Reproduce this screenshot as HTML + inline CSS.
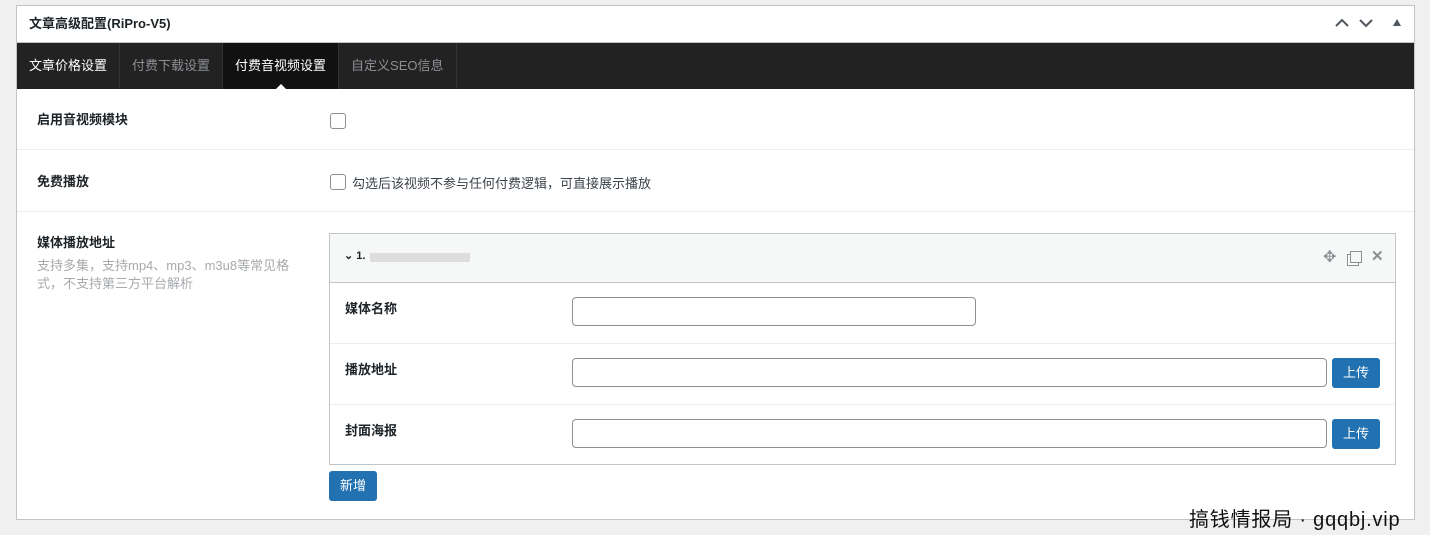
<!DOCTYPE html><html><head><meta charset="utf-8"><style>
body{margin:0;background:#f0f0f1;width:1430px;height:535px;overflow:hidden;font-family:"Liberation Sans","Noto Sans CJK SC",sans-serif;font-size:13px;color:#1d2327;position:relative}
.box{position:absolute;left:16px;top:5px;width:1399px;height:515px;background:#fff;border:1px solid #c3c4c7;box-sizing:border-box}
.hd{height:37px;border-bottom:1px solid #c3c4c7;box-sizing:border-box;font-weight:bold;font-size:13px;line-height:36px;padding-left:12px;position:relative}
.tabs{height:46px;background:#222;display:flex}
.tab{padding:0 12px;line-height:46px;color:#8c8f94;border-right:1px solid #333;font-size:13px;position:relative}
.tab.w{color:#fff}.tab.a{background:#111;color:#fff}
.tab.a:after{content:"";position:absolute;left:50%;bottom:0;margin-left:-5px;border:5px solid transparent;border-bottom-color:#fff;border-top:0}
.row{position:absolute;left:0;right:0;border-bottom:1px solid #eee}
.lb{position:absolute;left:20px;font-weight:bold}
.cb{position:absolute;width:14px;height:14px;border:1px solid #8c8f94;border-radius:3px;background:#fff}
.inp{position:absolute;height:29px;border:1px solid #8c8f94;border-radius:4px;box-sizing:border-box;background:#fff}
.btn{position:absolute;background:#2271b1;color:#fff;border-radius:3px;font-size:13px;text-align:center;line-height:30px;height:30px}
</style></head><body>
<div class="box">
<div class="hd">文章高级配置(RiPro-V5)
<svg style="position:absolute;left:1318px;top:12px" width="14" height="10"><path d="M1 8L7 2L13 8" stroke="#50575e" stroke-width="2" fill="none"/></svg>
<svg style="position:absolute;left:1342px;top:12px" width="14" height="10"><path d="M1 2L7 8L13 2" stroke="#50575e" stroke-width="2" fill="none"/></svg>
<svg style="position:absolute;left:1376px;top:13px" width="8" height="7"><path d="M0 7L4 0L8 7Z" fill="#50575e"/></svg>
</div>
<div class="tabs"><div class="tab w">文章价格设置</div><div class="tab">付费下载设置</div><div class="tab a">付费音视频设置</div><div class="tab">自定义SEO信息</div></div>
<div class="row" style="top:83px;height:60px"><div class="lb" style="top:20px">启用音视频模块</div><div class="cb" style="left:313px;top:24px"></div></div>
<div class="row" style="top:144px;height:61px"><div class="lb" style="top:21px">免费播放</div><div class="cb" style="left:313px;top:24px"></div><div style="position:absolute;left:335px;top:23px;color:#3c434a">勾选后该视频不参与任何付费逻辑，可直接展示播放</div></div>
<div class="lb" style="top:226px">媒体播放地址</div>
<div style="position:absolute;left:20px;top:251px;width:260px;color:#a7aaad;font-size:13px;line-height:18px">支持多集，支持mp4、mp3、m3u8等常见格式，不支持第三方平台解析</div>
<div style="position:absolute;left:312px;top:227px;width:1067px;height:232px;border:1px solid #c3c4c7;box-sizing:border-box">
<div style="height:48px;background:#f6f7f7;border-bottom:1px solid #c3c4c7;position:relative">
<div style="position:absolute;left:14px;top:15px;font-size:11px;font-weight:bold">⌄ 1.</div>
<div style="position:absolute;left:40px;top:19px;width:100px;height:9px;background:#ddd"></div>
<span style="position:absolute;left:993px;top:13px;color:#8c8f94;font-size:16px">✥</span>
<div style="position:absolute;left:1020px;top:17px;width:10px;height:10px;border:1.5px solid #8c8f94;box-shadow:-3px 3px 0 -1px #fff,-3px 3px 0 0 #8c8f94"></div>
<span style="position:absolute;left:1041px;top:13px;color:#8c8f94;font-weight:bold;font-size:15px">✕</span>
</div>
<div style="position:absolute;top:48px;left:0;right:0;height:61px;border-bottom:1px solid #eee"><div class="lb" style="left:15px;top:16px">媒体名称</div><div class="inp" style="left:242px;top:15px;width:404px"></div></div>
<div style="position:absolute;top:109px;left:0;right:0;height:61px;border-bottom:1px solid #eee"><div class="lb" style="left:15px;top:16px">播放地址</div><div class="inp" style="left:242px;top:15px;width:755px"></div><div class="btn" style="left:1002px;top:15px;width:48px">上传</div></div>
<div style="position:absolute;top:170px;left:0;right:0;height:61px"><div class="lb" style="left:15px;top:16px">封面海报</div><div class="inp" style="left:242px;top:15px;width:755px"></div><div class="btn" style="left:1002px;top:15px;width:48px">上传</div></div>
</div>
<div class="btn" style="left:312px;top:465px;width:48px">新增</div>
</div>
<div style="position:absolute;left:1189px;top:503px;font-size:20px;color:#111;letter-spacing:0.8px">搞钱情报局 · gqqbj.vip</div>
</body></html>
